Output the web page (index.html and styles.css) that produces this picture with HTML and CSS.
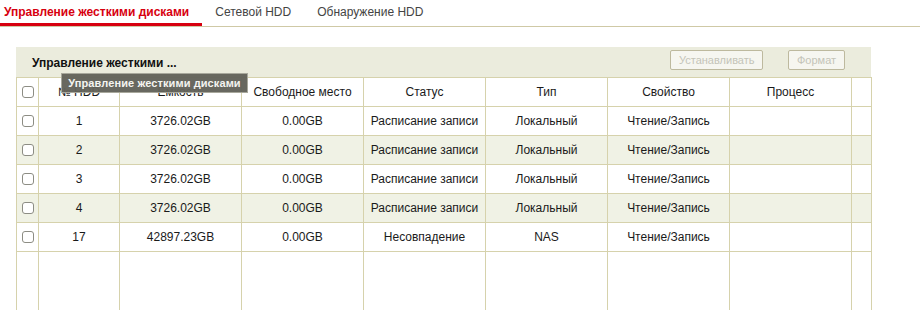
FILE: index.html
```html
<!DOCTYPE html>
<html>
<head>
  <meta charset="utf-8">
  <title>Управление жесткими дисками</title>
  <link rel="stylesheet" href="styles.css">
</head>
<body>
  <div class="tabs">
    <span class="tab active">Управление жесткими дисками</span>
    <span class="tab">Сетевой HDD</span>
    <span class="tab">Обнаружение HDD</span>
  </div>

  <div class="panel">
    <div class="panel-head">
      <span class="panel-title">Управление жесткими ...</span>
      <div class="actions">
        <button class="btn" disabled>Устанавливать</button>
        <button class="btn" disabled>Формат</button>
      </div>
      <div class="tooltip">Управление жесткими дисками</div>
    </div>

    <table class="grid">
      <colgroup>
        <col class="c-check">
        <col class="c-no">
        <col class="c-std"><col class="c-std"><col class="c-std">
        <col class="c-std"><col class="c-std"><col class="c-std">
        <col class="c-end">
      </colgroup>
      <thead>
        <tr>
          <th><span class="box"></span></th>
          <th>№ HDD</th>
          <th>Емкость</th>
          <th>Свободное место</th>
          <th>Статус</th>
          <th>Тип</th>
          <th>Свойство</th>
          <th>Процесс</th>
          <th></th>
        </tr>
      </thead>
      <tbody>
        <tr>
          <td><span class="box"></span></td>
          <td>1</td><td>3726.02GB</td><td>0.00GB</td><td>Расписание записи</td>
          <td>Локальный</td><td>Чтение/Запись</td><td></td><td></td>
        </tr>
        <tr class="alt">
          <td><span class="box"></span></td>
          <td>2</td><td>3726.02GB</td><td>0.00GB</td><td>Расписание записи</td>
          <td>Локальный</td><td>Чтение/Запись</td><td></td><td></td>
        </tr>
        <tr>
          <td><span class="box"></span></td>
          <td>3</td><td>3726.02GB</td><td>0.00GB</td><td>Расписание записи</td>
          <td>Локальный</td><td>Чтение/Запись</td><td></td><td></td>
        </tr>
        <tr class="alt">
          <td><span class="box"></span></td>
          <td>4</td><td>3726.02GB</td><td>0.00GB</td><td>Расписание записи</td>
          <td>Локальный</td><td>Чтение/Запись</td><td></td><td></td>
        </tr>
        <tr>
          <td><span class="box"></span></td>
          <td>17</td><td>42897.23GB</td><td>0.00GB</td><td>Несовпадение</td>
          <td>NAS</td><td>Чтение/Запись</td><td></td><td></td>
        </tr>
        <tr class="filler">
          <td></td><td></td><td></td><td></td><td></td>
          <td></td><td></td><td></td><td></td>
        </tr>
      </tbody>
    </table>
  </div>
</body>
</html>
```

FILE: styles.css
```css
* {
  margin: 0;
  padding: 0;
  box-sizing: border-box;
}

body {
  font-family: "Liberation Sans", Arial, sans-serif;
  font-size: 12px;
  color: #1a1a1a;
  background: #fff;
  overflow: hidden;
}

/* Tabs */
.tabs {
  display: flex;
  height: 27px;
  border-bottom: 1px solid #cfc9a6;
}

.tab {
  padding: 5px 13px 0;
  height: 26px;
  color: #444;
  font-size: 12px;
}

.tab.active {
  padding: 5px 13px 0 4px;
  color: #d7000f;
  font-weight: bold;
  border-bottom: 3px solid #d7000f;
}

/* Panel */
.panel {
  margin: 20px 0 0 16px;
  width: 855px;
}

.panel-head {
  position: relative;
  display: flex;
  align-items: center;
  justify-content: space-between;
  height: 30px;
  padding: 0 26px 0 16px;
  background: #ebecdd;
}

.panel-title {
  font-weight: bold;
  font-size: 12px;
  color: #111;
  margin-top: 1px;
}

.actions {
  display: flex;
  gap: 25px;
  margin-top: -4px;
}

.btn {
  height: 20px;
  padding: 0 8px;
  font-family: inherit;
  font-size: 11px;
  color: #c4c4b8;
  background: #f6f6f0;
  border: 1px solid #bdb99e;
  border-radius: 2px;
}

.btn:first-child {
  width: 93px;
}

.btn:last-child {
  width: 57px;
}

.tooltip {
  position: absolute;
  left: 45px;
  top: 26px;
  z-index: 2;
  width: 187px;
  height: 20px;
  padding-top: 3px;
  text-align: center;
  font-size: 11px;
  font-weight: bold;
  letter-spacing: 0.1px;
  color: #f4f4f0;
  background: rgba(98, 98, 90, 0.96);
  border: 1px solid #a8a89c;
}

/* Table */
.grid {
  width: 855px;
  border-collapse: collapse;
  table-layout: fixed;
}

.c-check { width: 22px; }
.c-no { width: 81px; }
.c-std { width: 122px; }
.c-end { width: 20px; }

.grid th,
.grid td {
  height: 29px;
  border: 1px solid #d6d2ac;
  text-align: center;
  font-weight: normal;
  font-size: 12px;
  color: #1a1a1a;
  white-space: nowrap;
  overflow: hidden;
}

.grid thead th {
  background: #fff;
}

.grid tr.alt td {
  background: #f0f2e5;
}

.grid tr.filler td {
  height: 59px;
  border-bottom: none;
}

.box {
  display: block;
  width: 12px;
  height: 12px;
  margin: 0 auto;
  border: 1px solid #8d8d84;
  border-radius: 3px;
  background: #fff;
}
```
